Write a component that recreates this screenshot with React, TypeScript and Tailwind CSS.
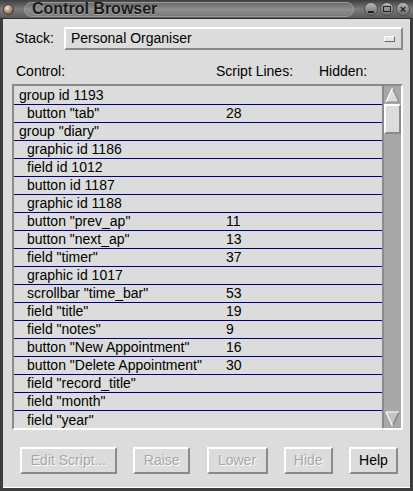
import React from 'react';

const rows: { name: string; indent: boolean; lines?: string }[] = [
  { name: 'group id 1193', indent: false },
  { name: 'button "tab"', indent: true, lines: '28' },
  { name: 'group "diary"', indent: false },
  { name: 'graphic id 1186', indent: true },
  { name: 'field id 1012', indent: true },
  { name: 'button id 1187', indent: true },
  { name: 'graphic id 1188', indent: true },
  { name: 'button "prev_ap"', indent: true, lines: '11' },
  { name: 'button "next_ap"', indent: true, lines: '13' },
  { name: 'field "timer"', indent: true, lines: '37' },
  { name: 'graphic id 1017', indent: true },
  { name: 'scrollbar "time_bar"', indent: true, lines: '53' },
  { name: 'field "title"', indent: true, lines: '19' },
  { name: 'field "notes"', indent: true, lines: '9' },
  { name: 'button "New Appointment"', indent: true, lines: '16' },
  { name: 'button "Delete Appointment"', indent: true, lines: '30' },
  { name: 'field "record_title"', indent: true },
  { name: 'field "month"', indent: true },
  { name: 'field "year"', indent: true },
];

const buttons = [
  { label: 'Edit Script...', w: 'w-[97px]', off: true },
  { label: 'Raise', w: 'w-[57px]', off: true },
  { label: 'Lower', w: 'w-[61px]', off: true },
  { label: 'Hide', w: 'w-[49px]', off: true },
  { label: 'Help', w: 'w-[49px]', off: false },
];

const TitleButton: React.FC<{ children: React.ReactNode }> = ({ children }) => (
  <div className="w-[14px] h-[14px] rounded-full bg-gradient-to-b from-[#b8b8b8] to-[#6e6e6e] border border-[#4a4a4a] flex items-center justify-center">
    {children}
  </div>
);

const App: React.FC = () => {
  return (
    <div className="w-[413px] h-[491px] flex flex-col bg-[#dcdcdc] overflow-hidden font-['Liberation_Sans',Arial,sans-serif] text-[14px] text-black">
      {/* title bar */}
      <div className="h-[19px] flex items-center bg-gradient-to-b from-[#3e3e3e] via-[#7c7c7c] to-[#5a5a5a] border-b border-[#2e2e2e] px-[3px] gap-[10px]">
        <div className="w-[11px] h-[11px] rounded-full bg-[radial-gradient(circle_at_35%_35%,#f4e6d0,#9a7a5a_60%,#4a3a2a)] border border-[#3a3a3a]" />
        <div className="flex-1 h-[15px] rounded-full bg-gradient-to-b from-[#6a6a6a] via-[#8e8e8e] to-[#7a7a7a] border border-[#9a9a9a] flex items-center pl-[7px]">
          <span className="font-bold text-[16px] leading-none text-[#1a1a1a] [text-shadow:0_1px_0_#a8a8a8]">Control Browser</span>
        </div>
        <div className="flex gap-[2px]">
          <TitleButton>
            <div className="w-[6px] h-[2px] bg-[#222] mt-[5px]" />
          </TitleButton>
          <TitleButton>
            <div className="w-[8px] h-[6px] border-[1.5px] border-[#222]" />
          </TitleButton>
          <TitleButton>
            <span className="text-[11px] leading-none font-bold text-[#222]">×</span>
          </TitleButton>
        </div>
      </div>

      {/* body */}
      <div className="flex-1 flex flex-col border-l-[3px] border-r-[3px] border-b-[3px] border-[#3c3c3c]">
        <div className="flex-1 flex flex-col border-b border-white pl-[9px] pr-[7px]">
          {/* stack */}
          <div className="flex items-center mt-[8px] h-[23px]">
            <span className="w-[52px] pl-[3px]">Stack:</span>
            <div className="flex-1 h-[23px] flex items-center justify-between border-2 border-t-white border-l-white border-b-[#8a8a8a] border-r-[#8a8a8a] pl-[5px] pr-[6px]">
              <span>Personal Organiser</span>
              <div className="w-[11px] h-[6px] bg-[#e8e8e8] border border-t-white border-l-white border-b-[#6a6a6a] border-r-[#6a6a6a]" />
            </div>
          </div>

          {/* headers */}
          <div className="flex items-center mt-[13px] h-[16px]">
            <span className="w-[204px] pl-[4px]">Control:</span>
            <span className="w-[103px]">Script Lines:</span>
            <span>Hidden:</span>
          </div>

          {/* list */}
          <div className="mt-[5px] h-[346px] flex border-2 border-t-[#8a8a8a] border-l-[#8a8a8a] border-b-white border-r-white">
            <div className="flex-1 flex flex-col pt-px">
              {rows.map((r, i) => (
                <div key={i} className="h-[18px] flex items-center border-b border-[#00007a] last:border-b-0 shrink-0">
                  <span className={`${r.indent ? 'pl-[13px]' : 'pl-[5px]'} w-[212px] whitespace-nowrap`}>{r.name}</span>
                  <span>{r.lines}</span>
                </div>
              ))}
            </div>
            <div className="w-[19px] flex flex-col bg-[#a8a8a8] border-l-2 border-[#8a8a8a]">
              <div className="h-[18px] flex items-center justify-center">
                <svg width="15" height="16" viewBox="0 0 15 16">
                  <path d="M7.5 1 L14 15 L1 15 Z" fill="#dcdcdc" />
                  <path d="M7.5 1 L14 15 L1 15" fill="none" stroke="#8a8a8a" strokeWidth="1.2" />
                  <path d="M7.5 1 L1 15" stroke="#ffffff" strokeWidth="1.2" />
                </svg>
              </div>
              <div className="h-[30px] bg-[#dcdcdc] border-2 border-t-white border-l-white border-b-[#8a8a8a] border-r-[#8a8a8a]" />
              <div className="flex-1" />
              <div className="h-[18px] flex items-center justify-center">
                <svg width="15" height="16" viewBox="0 0 15 16">
                  <path d="M1 1 L14 1 L7.5 15 Z" fill="#c4c4c4" />
                  <path d="M14 1 L7.5 15" fill="none" stroke="#7a7a7a" strokeWidth="1.2" />
                  <path d="M1 1 L14 1 M1 1 L7.5 15" stroke="#ffffff" strokeWidth="1.2" />
                </svg>
              </div>
            </div>
          </div>

          {/* buttons */}
          <div className="flex justify-between mt-[17px] pl-[8px] pr-[5px]">
            {buttons.map((b) => (
              <div
                key={b.label}
                className={`${b.w} h-[27px] flex items-center justify-center border-2 border-t-white border-l-white border-b-[#8a8a8a] border-r-[#8a8a8a] ${b.off ? 'text-[#a8a8a8] [text-shadow:1px_1px_0_#ffffff]' : 'text-black'}`}
              >
                {b.label}
              </div>
            ))}
          </div>
        </div>
      </div>
    </div>
  );
};

export default App;
